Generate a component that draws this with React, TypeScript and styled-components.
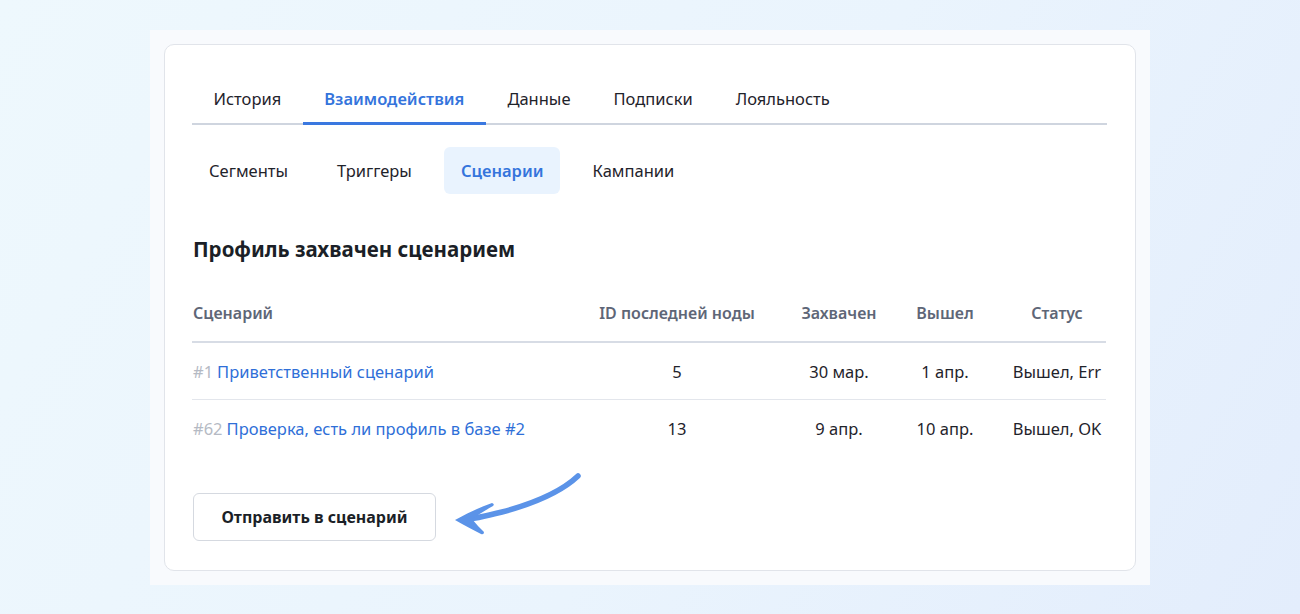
import styled, { createGlobalStyle } from "styled-components";

const GlobalStyle = createGlobalStyle`
  * { box-sizing: border-box; }
  body {
    margin: 0;
    font-family: "Noto Sans", "Open Sans", sans-serif;
    color: #1d222c;
  }
`;

const Page = styled.div`
  width: 1300px;
  height: 614px;
  padding: 30px 150px;
  background: linear-gradient(120deg, #eef8fd 0%, #eaf4fd 55%, #e3edfc 100%);
`;

const Frame = styled.div`
  width: 1000px;
  padding: 14px;
  background: #f8fafd;
`;

const Card = styled.div`
  position: relative;
  background: #fff;
  border: 1px solid #e1e4ea;
  border-radius: 10px;
  padding: 29px 28px 29px 27px;
`;

const Tabs = styled.div`
  display: flex;
  border-bottom: 2px solid #cfd5df;
`;

const Tab = styled.div<{ $active?: boolean }>`
  height: 51px;
  padding: 1px 21.5px 0;
  margin-bottom: -2px;
  display: flex;
  align-items: center;
  font-size: 16.5px;
  font-weight: ${(p) => (p.$active ? 600 : 400)};
  color: ${(p) => (p.$active ? "#3474dc" : "#1f232b")};
  border-bottom: 3px solid ${(p) => (p.$active ? "#3a78e0" : "transparent")};
`;

const SubTabs = styled.div`
  display: flex;
  gap: 15px;
  margin-top: 22px;
`;

const SubTab = styled.div<{ $active?: boolean }>`
  height: 47px;
  padding: 0 17px;
  display: flex;
  align-items: center;
  border-radius: 6px;
  font-size: 16.5px;
  font-weight: ${(p) => (p.$active ? 600 : 400)};
  color: ${(p) => (p.$active ? "#3474dc" : "#1f232b")};
  background: ${(p) => (p.$active ? "#e9f3fe" : "transparent")};
`;

const Heading = styled.h2`
  margin: 41px 0 21px 1px;
  font-size: 20.5px;
  line-height: 28px;
  font-weight: 700;
  color: #1b1f27;
`;

const Table = styled.div`
  display: grid;
  grid-template-columns: 366px 238px 86px 126px 98px;
`;

const HeadCell = styled.div<{ $left?: boolean }>`
  height: 59px;
  display: flex;
  align-items: center;
  justify-content: ${(p) => (p.$left ? "flex-start" : "center")};
  padding-left: ${(p) => (p.$left ? "1px" : "0")};
  border-bottom: 2px solid #d7dce5;
  font-size: 16px;
  font-weight: 600;
  color: #5e6677;
  white-space: nowrap;
`;

const Cell = styled.div<{ $left?: boolean; $last?: boolean }>`
  height: 57px;
  display: flex;
  align-items: center;
  justify-content: ${(p) => (p.$left ? "flex-start" : "center")};
  padding-left: ${(p) => (p.$left ? "1px" : "0")};
  border-bottom: ${(p) => (p.$last ? "none" : "1px solid #e3e6ec")};
  font-size: 16.5px;
  color: #1f232b;
  white-space: nowrap;
`;

const Num = styled.span`
  color: #b5bac4;
  margin-right: 4px;
`;

const Link = styled.a`
  color: #2f6fd8;
  text-decoration: none;
`;

const Footer = styled.div`
  display: flex;
  align-items: center;
  margin-top: 36px;
`;

const Button = styled.button`
  width: 243px;
  height: 48px;
  margin-left: 1px;
  border: 1px solid #d5d9e0;
  border-radius: 6px;
  background: #fff;
  font-family: inherit;
  font-size: 16px;
  font-weight: 700;
  color: #1b1f27;
`;

const Arrow = styled.svg`
  position: absolute;
  left: 285px;
  top: 422px;
  overflow: visible;
`;

const rows = [
  { num: "#1", name: "Приветственный сценарий", node: "5", caught: "30 мар.", left: "1 апр.", status: "Вышел, Err" },
  { num: "#62", name: "Проверка, есть ли профиль в базе #2", node: "13", caught: "9 апр.", left: "10 апр.", status: "Вышел, OK" },
];

export default function App() {
  return (
    <>
      <GlobalStyle />
      <Page>
        <Frame>
          <Card>
            <Tabs>
              <Tab>История</Tab>
              <Tab $active>Взаимодействия</Tab>
              <Tab>Данные</Tab>
              <Tab>Подписки</Tab>
              <Tab>Лояльность</Tab>
            </Tabs>
            <SubTabs>
              <SubTab>Сегменты</SubTab>
              <SubTab>Триггеры</SubTab>
              <SubTab $active>Сценарии</SubTab>
              <SubTab>Кампании</SubTab>
            </SubTabs>
            <Heading>Профиль захвачен сценарием</Heading>
            <Table>
              <HeadCell $left>Сценарий</HeadCell>
              <HeadCell>ID последней ноды</HeadCell>
              <HeadCell>Захвачен</HeadCell>
              <HeadCell>Вышел</HeadCell>
              <HeadCell>Статус</HeadCell>
              {rows.map((r, i) => {
                const last = i === rows.length - 1;
                return (
                  <>
                    <Cell $left $last={last} key={r.num}>
                      <Num>{r.num}</Num>
                      <Link href="#">{r.name}</Link>
                    </Cell>
                    <Cell $last={last}>{r.node}</Cell>
                    <Cell $last={last}>{r.caught}</Cell>
                    <Cell $last={last}>{r.left}</Cell>
                    <Cell $last={last}>{r.status}</Cell>
                  </>
                );
              })}
            </Table>
            <Footer>
              <Button>Отправить в сценарий</Button>
            </Footer>
            {/* hand-drawn pointer arrow */}
            <Arrow width="140" height="75" viewBox="0 0 140 75">
              <path
                d="M128 9 C 110 26, 82 37, 52 45 C 36 49, 22 52, 12 53"
                fill="none"
                stroke="#5b93e8"
                strokeWidth="5.5"
                strokeLinecap="round"
              />
              <path
                d="M5 53 C 18 46, 30 40, 42 36 Q 45 37 43 39 C 34 44, 28 48, 22 52 C 26 57, 30 61, 34 65 Q 34 68 31 67 C 22 62, 13 58, 5 53 Z"
                fill="#5b93e8"
              />
            </Arrow>
          </Card>
        </Frame>
      </Page>
    </>
  );
}
